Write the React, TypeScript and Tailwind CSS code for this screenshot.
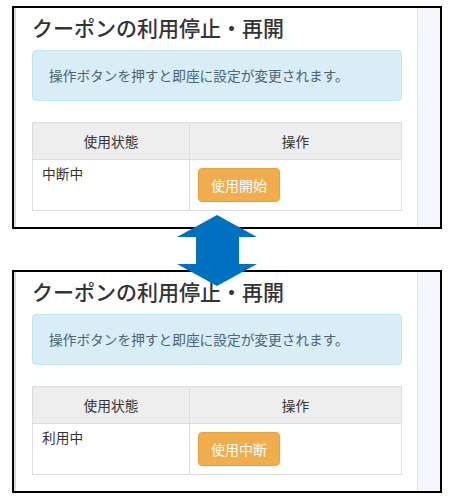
const font = { fontFamily: '"Noto Sans CJK JP", "Noto Sans", sans-serif' };

interface PanelProps {
    status: string;
    action: string;
}

function Panel({ status, action }: PanelProps) {
    return (
        <div className="flex h-[223px] w-[430px] border-2 border-black bg-white">
            <div className="w-[2px] bg-[#d7dade]" />
            <div className="flex w-[401px] flex-col pl-[16px] pr-[15px]">
                <h3 className="mt-[8px] text-[21px] leading-[23px] font-medium text-[#333333]">
                    クーポンの利用停止・再開
                </h3>
                <div className="mt-[11px] flex h-[51px] items-center rounded-[4px] border border-[#bce8f1] bg-[#d9edf7] px-[16px] text-[13.7px] text-[#4b6473]">
                    操作ボタンを押すと即座に設定が変更されます。
                </div>
                <table className="mt-[21px] w-[370px] border-collapse text-[13.7px] text-[#333333]">
                    <thead>
                        <tr className="h-[37px] bg-[#eeeeee]">
                            <th className="w-[157px] border border-[#dddddd] font-normal">使用状態</th>
                            <th className="border border-[#dddddd] font-normal">操作</th>
                        </tr>
                    </thead>
                    <tbody>
                        <tr className="h-[51px]">
                            <td className="border border-[#dddddd] px-[9px] py-[3px] align-top leading-[20px]">{status}</td>
                            <td className="border border-[#dddddd] px-[8px] py-[8px] align-top">
                                <button className="h-[34px] w-[82px] rounded-[4px] border border-[#eea236] bg-[#f0ad4e] text-[14px] text-white">
                                    {action}
                                </button>
                            </td>
                        </tr>
                    </tbody>
                </table>
            </div>
            <div className="w-[1px] bg-[#dfe1e5]" />
            <div className="flex-1 bg-[#f4f6fb]" />
        </div>
    );
}

export default function App() {
    return (
        <div className="relative h-[501px] w-[452px] bg-white pl-[12px] pt-[6px]" style={font}>
            <Panel status="中断中" action="使用開始" />
            <div className="h-[41px]" />
            <Panel status="利用中" action="使用中断" />
            <svg className="absolute left-[177px] top-[215px]" width="80" height="71" viewBox="0 0 80 71">
                <polygon
                    points="40,0 80,22 62,22 62,49 80,49 40,71 0,49 19,49 19,22 0,22"
                    fill="#0070c0"
                />
            </svg>
        </div>
    );
}
